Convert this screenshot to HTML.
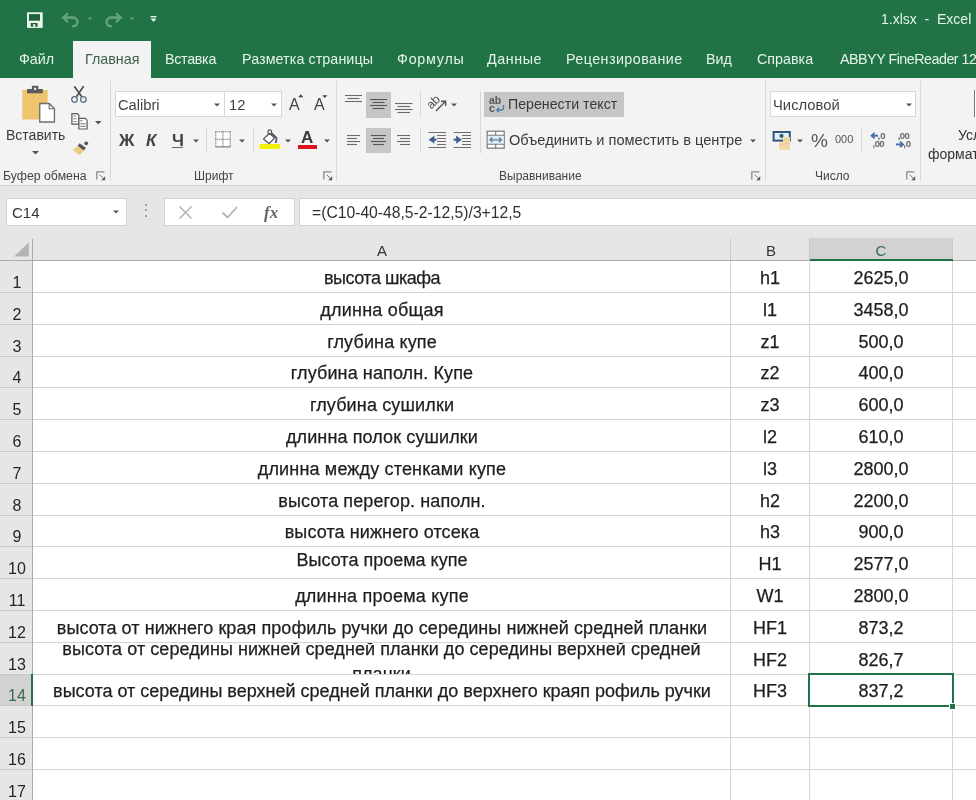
<!DOCTYPE html>
<html><head><meta charset="utf-8"><style>
html,body{margin:0;padding:0;width:976px;height:800px;overflow:hidden;background:#fff;font-family:"Liberation Sans", sans-serif;}
.a{position:absolute;}
.t{white-space:nowrap;will-change:transform;}
</style></head><body>
<div class="a" style="left:0px;top:0px;width:976px;height:78px;background:#217346;"></div><div class="a" style="left:73px;top:41px;width:78px;height:37px;background:#f3f3f3;"></div><div class="a t" style="left:18.5px;top:52.40px;font-size:14.3px;line-height:14.3px;color:#e4f4ea;letter-spacing:0px;">Файл</div><div class="a t" style="left:165px;top:52.40px;font-size:14.3px;line-height:14.3px;color:#e4f4ea;letter-spacing:-0.3px;">Вставка</div><div class="a t" style="left:242px;top:52.40px;font-size:14.3px;line-height:14.3px;color:#e4f4ea;letter-spacing:0.08px;">Разметка страницы</div><div class="a t" style="left:396.5px;top:52.40px;font-size:14.3px;line-height:14.3px;color:#e4f4ea;letter-spacing:0.77px;">Формулы</div><div class="a t" style="left:486.8px;top:52.40px;font-size:14.3px;line-height:14.3px;color:#e4f4ea;letter-spacing:0.56px;">Данные</div><div class="a t" style="left:566px;top:52.40px;font-size:14.3px;line-height:14.3px;color:#e4f4ea;letter-spacing:0.44px;">Рецензирование</div><div class="a t" style="left:706px;top:52.40px;font-size:14.3px;line-height:14.3px;color:#e4f4ea;letter-spacing:0px;">Вид</div><div class="a t" style="left:757px;top:52.40px;font-size:14.3px;line-height:14.3px;color:#e4f4ea;letter-spacing:0px;">Справка</div><div class="a t" style="left:839.5px;top:52.40px;font-size:14.3px;line-height:14.3px;color:#e4f4ea;letter-spacing:-0.5px;">ABBYY FineReader 12</div><div class="a t" style="left:85px;top:52.40px;font-size:14.3px;line-height:14.3px;color:#3e5f4b;">Главная</div><div class="a t" style="left:881px;top:11.85px;font-size:14px;line-height:14px;color:#e4f4ea;">1.xlsx&nbsp;&nbsp;-&nbsp;&nbsp;Excel</div><div class="a" style="left:0px;top:78px;width:976px;height:107px;background:#f3f3f3;"></div><div class="a" style="left:0px;top:185px;width:976px;height:1px;background:#d5d5d5;"></div><div class="a" style="left:110px;top:81px;width:1px;height:100px;background:#d9d9d9;"></div><div class="a" style="left:336px;top:81px;width:1px;height:100px;background:#d9d9d9;"></div><div class="a" style="left:765px;top:81px;width:1px;height:100px;background:#d9d9d9;"></div><div class="a" style="left:920px;top:81px;width:1px;height:100px;background:#d9d9d9;"></div><div class="a t" style="left:3.2px;top:169.89px;font-size:12.3px;line-height:12.3px;color:#444;">Буфер обмена</div><div class="a t" style="left:194px;top:170.14px;font-size:12px;line-height:12px;color:#444;">Шрифт</div><div class="a t" style="left:499px;top:170.14px;font-size:12px;line-height:12px;color:#444;">Выравнивание</div><div class="a t" style="left:815px;top:170.14px;font-size:12px;line-height:12px;color:#444;">Число</div><div class="a" style="left:0px;top:186px;width:976px;height:52px;background:#e6e6e6;"></div><div class="a" style="left:6px;top:198px;width:121px;height:28px;background:#fff;box-sizing:border-box;border:1px solid #d4d4d4;"></div><div class="a t" style="left:12px;top:204.80px;font-size:15px;line-height:15px;color:#333;">C14</div><div class="a" style="left:164px;top:198px;width:131px;height:28px;background:#fff;box-sizing:border-box;border:1px solid #d4d4d4;"></div><div class="a" style="left:299px;top:198px;width:690px;height:28px;background:#fff;box-sizing:border-box;border:1px solid #d4d4d4;"></div><div class="a t" style="left:311.5px;top:205.31px;font-size:15.7px;line-height:15.7px;color:#303030;">=(C10-40-48,5-2-12,5)/3+12,5</div><div class="a" style="left:0px;top:238px;width:976px;height:562px;background:#fff;"></div><div class="a" style="left:0px;top:238px;width:976px;height:22px;background:#e6e6e6;"></div><div class="a" style="left:0px;top:260px;width:32px;height:540px;background:#e6e6e6;"></div><div class="a" style="left:810px;top:238px;width:143px;height:22px;background:#d2d2d2;"></div><div class="a" style="left:0px;top:674px;width:32px;height:31px;background:#d2d2d2;"></div><div class="a" style="left:0px;top:260px;width:976px;height:1px;background:#d4d4d4;"></div><div class="a" style="left:0px;top:292px;width:976px;height:1px;background:#d4d4d4;"></div><div class="a" style="left:0px;top:324px;width:976px;height:1px;background:#d4d4d4;"></div><div class="a" style="left:0px;top:356px;width:976px;height:1px;background:#d4d4d4;"></div><div class="a" style="left:0px;top:387px;width:976px;height:1px;background:#d4d4d4;"></div><div class="a" style="left:0px;top:419px;width:976px;height:1px;background:#d4d4d4;"></div><div class="a" style="left:0px;top:451px;width:976px;height:1px;background:#d4d4d4;"></div><div class="a" style="left:0px;top:483px;width:976px;height:1px;background:#d4d4d4;"></div><div class="a" style="left:0px;top:515px;width:976px;height:1px;background:#d4d4d4;"></div><div class="a" style="left:0px;top:546px;width:976px;height:1px;background:#d4d4d4;"></div><div class="a" style="left:0px;top:578px;width:976px;height:1px;background:#d4d4d4;"></div><div class="a" style="left:0px;top:610px;width:976px;height:1px;background:#d4d4d4;"></div><div class="a" style="left:0px;top:642px;width:976px;height:1px;background:#d4d4d4;"></div><div class="a" style="left:0px;top:674px;width:976px;height:1px;background:#d4d4d4;"></div><div class="a" style="left:0px;top:705px;width:976px;height:1px;background:#d4d4d4;"></div><div class="a" style="left:0px;top:737px;width:976px;height:1px;background:#d4d4d4;"></div><div class="a" style="left:0px;top:769px;width:976px;height:1px;background:#d4d4d4;"></div><div class="a" style="left:0px;top:801px;width:976px;height:1px;background:#d4d4d4;"></div><div class="a" style="left:32px;top:238px;width:1px;height:562px;background:#d4d4d4;"></div><div class="a" style="left:730px;top:238px;width:1px;height:562px;background:#d4d4d4;"></div><div class="a" style="left:809px;top:238px;width:1px;height:562px;background:#d4d4d4;"></div><div class="a" style="left:952px;top:238px;width:1px;height:562px;background:#d4d4d4;"></div><div class="a" style="left:0px;top:292px;width:32px;height:1px;background:#c9c9c9;"></div><div class="a" style="left:0px;top:324px;width:32px;height:1px;background:#c9c9c9;"></div><div class="a" style="left:0px;top:356px;width:32px;height:1px;background:#c9c9c9;"></div><div class="a" style="left:0px;top:387px;width:32px;height:1px;background:#c9c9c9;"></div><div class="a" style="left:0px;top:419px;width:32px;height:1px;background:#c9c9c9;"></div><div class="a" style="left:0px;top:451px;width:32px;height:1px;background:#c9c9c9;"></div><div class="a" style="left:0px;top:483px;width:32px;height:1px;background:#c9c9c9;"></div><div class="a" style="left:0px;top:515px;width:32px;height:1px;background:#c9c9c9;"></div><div class="a" style="left:0px;top:546px;width:32px;height:1px;background:#c9c9c9;"></div><div class="a" style="left:0px;top:578px;width:32px;height:1px;background:#c9c9c9;"></div><div class="a" style="left:0px;top:610px;width:32px;height:1px;background:#c9c9c9;"></div><div class="a" style="left:0px;top:642px;width:32px;height:1px;background:#c9c9c9;"></div><div class="a" style="left:0px;top:674px;width:32px;height:1px;background:#c9c9c9;"></div><div class="a" style="left:0px;top:705px;width:32px;height:1px;background:#c9c9c9;"></div><div class="a" style="left:0px;top:737px;width:32px;height:1px;background:#c9c9c9;"></div><div class="a" style="left:0px;top:769px;width:32px;height:1px;background:#c9c9c9;"></div><div class="a" style="left:0px;top:801px;width:32px;height:1px;background:#c9c9c9;"></div><div class="a" style="left:730px;top:239px;width:1px;height:21px;background:#c9c9c9;"></div><div class="a" style="left:809px;top:239px;width:1px;height:21px;background:#c9c9c9;"></div><div class="a" style="left:952px;top:239px;width:1px;height:21px;background:#c9c9c9;"></div><div class="a" style="left:0px;top:260px;width:976px;height:1px;background:#ababab;"></div><div class="a" style="left:32px;top:239px;width:1px;height:562px;background:#ababab;"></div><svg class="a" style="left:13px;top:241px;" width="17" height="17" viewBox="0 0 17 17"><path d="M15.9 1.3V15.5H1.2z" fill="#b4b4b4"/></svg><div class="a" style="left:810px;top:259px;width:143px;height:2px;background:#217346;"></div><div class="a" style="left:31px;top:674px;width:2px;height:32px;background:#217346;"></div><div class="a t" style="left:-218.5px;width:1200px;text-align:center;top:242.90px;font-size:15px;line-height:15px;color:#333;">A</div><div class="a t" style="left:171.0px;width:1200px;text-align:center;top:242.90px;font-size:15px;line-height:15px;color:#333;">B</div><div class="a t" style="left:281.0px;width:1200px;text-align:center;top:242.90px;font-size:15px;line-height:15px;color:#3b6b4e;">C</div><div class="a t" style="left:-583.2px;width:1200px;text-align:center;top:274.86px;font-size:16px;line-height:16px;color:#262626;">1</div><div class="a t" style="left:-583.2px;width:1200px;text-align:center;top:306.86px;font-size:16px;line-height:16px;color:#262626;">2</div><div class="a t" style="left:-583.2px;width:1200px;text-align:center;top:338.86px;font-size:16px;line-height:16px;color:#262626;">3</div><div class="a t" style="left:-583.2px;width:1200px;text-align:center;top:369.86px;font-size:16px;line-height:16px;color:#262626;">4</div><div class="a t" style="left:-583.2px;width:1200px;text-align:center;top:401.86px;font-size:16px;line-height:16px;color:#262626;">5</div><div class="a t" style="left:-583.2px;width:1200px;text-align:center;top:433.86px;font-size:16px;line-height:16px;color:#262626;">6</div><div class="a t" style="left:-583.2px;width:1200px;text-align:center;top:465.86px;font-size:16px;line-height:16px;color:#262626;">7</div><div class="a t" style="left:-583.2px;width:1200px;text-align:center;top:497.86px;font-size:16px;line-height:16px;color:#262626;">8</div><div class="a t" style="left:-583.2px;width:1200px;text-align:center;top:528.86px;font-size:16px;line-height:16px;color:#262626;">9</div><div class="a t" style="left:-583.2px;width:1200px;text-align:center;top:560.86px;font-size:16px;line-height:16px;color:#262626;">10</div><div class="a t" style="left:-583.2px;width:1200px;text-align:center;top:592.86px;font-size:16px;line-height:16px;color:#262626;">11</div><div class="a t" style="left:-583.2px;width:1200px;text-align:center;top:624.86px;font-size:16px;line-height:16px;color:#262626;">12</div><div class="a t" style="left:-583.2px;width:1200px;text-align:center;top:656.86px;font-size:16px;line-height:16px;color:#262626;">13</div><div class="a t" style="left:-583.2px;width:1200px;text-align:center;top:687.86px;font-size:16px;line-height:16px;color:#3b6b4e;">14</div><div class="a t" style="left:-583.2px;width:1200px;text-align:center;top:719.86px;font-size:16px;line-height:16px;color:#262626;">15</div><div class="a t" style="left:-583.2px;width:1200px;text-align:center;top:751.86px;font-size:16px;line-height:16px;color:#262626;">16</div><div class="a t" style="left:-583.2px;width:1200px;text-align:center;top:783.86px;font-size:16px;line-height:16px;color:#262626;">17</div><div class="a t" style="left:-218.5px;width:1200px;text-align:center;top:268.96px;font-size:18px;line-height:18px;color:#1e1e1e;letter-spacing:-0.48px;-webkit-text-stroke:0.25px #1e1e1e;">высота шкафа</div><div class="a t" style="left:170.0px;width:1200px;text-align:center;top:268.96px;font-size:18px;line-height:18px;color:#1e1e1e;-webkit-text-stroke:0.25px #1e1e1e;">h1</div><div class="a t" style="left:281.0px;width:1200px;text-align:center;top:268.96px;font-size:18px;line-height:18px;color:#1e1e1e;-webkit-text-stroke:0.25px #1e1e1e;">2625,0</div><div class="a t" style="left:-218.5px;width:1200px;text-align:center;top:300.96px;font-size:18px;line-height:18px;color:#1e1e1e;letter-spacing:0.21px;-webkit-text-stroke:0.25px #1e1e1e;">длинна общая</div><div class="a t" style="left:170.0px;width:1200px;text-align:center;top:300.96px;font-size:18px;line-height:18px;color:#1e1e1e;-webkit-text-stroke:0.25px #1e1e1e;">l1</div><div class="a t" style="left:281.0px;width:1200px;text-align:center;top:300.96px;font-size:18px;line-height:18px;color:#1e1e1e;-webkit-text-stroke:0.25px #1e1e1e;">3458,0</div><div class="a t" style="left:-218.5px;width:1200px;text-align:center;top:332.96px;font-size:18px;line-height:18px;color:#1e1e1e;letter-spacing:0.14px;-webkit-text-stroke:0.25px #1e1e1e;">глубина купе</div><div class="a t" style="left:170.0px;width:1200px;text-align:center;top:332.96px;font-size:18px;line-height:18px;color:#1e1e1e;-webkit-text-stroke:0.25px #1e1e1e;">z1</div><div class="a t" style="left:281.0px;width:1200px;text-align:center;top:332.96px;font-size:18px;line-height:18px;color:#1e1e1e;-webkit-text-stroke:0.25px #1e1e1e;">500,0</div><div class="a t" style="left:-218.5px;width:1200px;text-align:center;top:363.96px;font-size:18px;line-height:18px;color:#1e1e1e;letter-spacing:0.11px;-webkit-text-stroke:0.25px #1e1e1e;">глубина наполн. Купе</div><div class="a t" style="left:170.0px;width:1200px;text-align:center;top:363.96px;font-size:18px;line-height:18px;color:#1e1e1e;-webkit-text-stroke:0.25px #1e1e1e;">z2</div><div class="a t" style="left:281.0px;width:1200px;text-align:center;top:363.96px;font-size:18px;line-height:18px;color:#1e1e1e;-webkit-text-stroke:0.25px #1e1e1e;">400,0</div><div class="a t" style="left:-218.5px;width:1200px;text-align:center;top:395.96px;font-size:18px;line-height:18px;color:#1e1e1e;letter-spacing:0.14px;-webkit-text-stroke:0.25px #1e1e1e;">глубина сушилки</div><div class="a t" style="left:170.0px;width:1200px;text-align:center;top:395.96px;font-size:18px;line-height:18px;color:#1e1e1e;-webkit-text-stroke:0.25px #1e1e1e;">z3</div><div class="a t" style="left:281.0px;width:1200px;text-align:center;top:395.96px;font-size:18px;line-height:18px;color:#1e1e1e;-webkit-text-stroke:0.25px #1e1e1e;">600,0</div><div class="a t" style="left:-218.5px;width:1200px;text-align:center;top:427.96px;font-size:18px;line-height:18px;color:#1e1e1e;letter-spacing:0.11px;-webkit-text-stroke:0.25px #1e1e1e;">длинна полок сушилки</div><div class="a t" style="left:170.0px;width:1200px;text-align:center;top:427.96px;font-size:18px;line-height:18px;color:#1e1e1e;-webkit-text-stroke:0.25px #1e1e1e;">l2</div><div class="a t" style="left:281.0px;width:1200px;text-align:center;top:427.96px;font-size:18px;line-height:18px;color:#1e1e1e;-webkit-text-stroke:0.25px #1e1e1e;">610,0</div><div class="a t" style="left:-218.5px;width:1200px;text-align:center;top:459.96px;font-size:18px;line-height:18px;color:#1e1e1e;letter-spacing:0.16px;-webkit-text-stroke:0.25px #1e1e1e;">длинна между стенками купе</div><div class="a t" style="left:170.0px;width:1200px;text-align:center;top:459.96px;font-size:18px;line-height:18px;color:#1e1e1e;-webkit-text-stroke:0.25px #1e1e1e;">l3</div><div class="a t" style="left:281.0px;width:1200px;text-align:center;top:459.96px;font-size:18px;line-height:18px;color:#1e1e1e;-webkit-text-stroke:0.25px #1e1e1e;">2800,0</div><div class="a t" style="left:-218.5px;width:1200px;text-align:center;top:491.96px;font-size:18px;line-height:18px;color:#1e1e1e;letter-spacing:0.1px;-webkit-text-stroke:0.25px #1e1e1e;">высота перегор. наполн.</div><div class="a t" style="left:170.0px;width:1200px;text-align:center;top:491.96px;font-size:18px;line-height:18px;color:#1e1e1e;-webkit-text-stroke:0.25px #1e1e1e;">h2</div><div class="a t" style="left:281.0px;width:1200px;text-align:center;top:491.96px;font-size:18px;line-height:18px;color:#1e1e1e;-webkit-text-stroke:0.25px #1e1e1e;">2200,0</div><div class="a t" style="left:-218.5px;width:1200px;text-align:center;top:522.96px;font-size:18px;line-height:18px;color:#1e1e1e;letter-spacing:0.1px;-webkit-text-stroke:0.25px #1e1e1e;">высота нижнего отсека</div><div class="a t" style="left:170.0px;width:1200px;text-align:center;top:522.96px;font-size:18px;line-height:18px;color:#1e1e1e;-webkit-text-stroke:0.25px #1e1e1e;">h3</div><div class="a t" style="left:281.0px;width:1200px;text-align:center;top:522.96px;font-size:18px;line-height:18px;color:#1e1e1e;-webkit-text-stroke:0.25px #1e1e1e;">900,0</div><div class="a t" style="left:-218.5px;width:1200px;text-align:center;top:551.46px;font-size:18px;line-height:18px;color:#1e1e1e;letter-spacing:0px;-webkit-text-stroke:0.25px #1e1e1e;">Высота проема купе</div><div class="a t" style="left:170.0px;width:1200px;text-align:center;top:554.96px;font-size:18px;line-height:18px;color:#1e1e1e;-webkit-text-stroke:0.25px #1e1e1e;">H1</div><div class="a t" style="left:281.0px;width:1200px;text-align:center;top:554.96px;font-size:18px;line-height:18px;color:#1e1e1e;-webkit-text-stroke:0.25px #1e1e1e;">2577,0</div><div class="a t" style="left:-218.5px;width:1200px;text-align:center;top:586.96px;font-size:18px;line-height:18px;color:#1e1e1e;letter-spacing:0.21px;-webkit-text-stroke:0.25px #1e1e1e;">длинна проема купе</div><div class="a t" style="left:170.0px;width:1200px;text-align:center;top:586.96px;font-size:18px;line-height:18px;color:#1e1e1e;-webkit-text-stroke:0.25px #1e1e1e;">W1</div><div class="a t" style="left:281.0px;width:1200px;text-align:center;top:586.96px;font-size:18px;line-height:18px;color:#1e1e1e;-webkit-text-stroke:0.25px #1e1e1e;">2800,0</div><div class="a t" style="left:-218.5px;width:1200px;text-align:center;top:618.96px;font-size:18px;line-height:18px;color:#1e1e1e;letter-spacing:0.07px;-webkit-text-stroke:0.25px #1e1e1e;">высота от нижнего края профиль ручки до середины нижней средней планки</div><div class="a t" style="left:170.0px;width:1200px;text-align:center;top:618.96px;font-size:18px;line-height:18px;color:#1e1e1e;-webkit-text-stroke:0.25px #1e1e1e;">HF1</div><div class="a t" style="left:281.0px;width:1200px;text-align:center;top:618.96px;font-size:18px;line-height:18px;color:#1e1e1e;-webkit-text-stroke:0.25px #1e1e1e;">873,2</div><div class="a t" style="left:170.0px;width:1200px;text-align:center;top:650.96px;font-size:18px;line-height:18px;color:#1e1e1e;-webkit-text-stroke:0.25px #1e1e1e;">HF2</div><div class="a t" style="left:281.0px;width:1200px;text-align:center;top:650.96px;font-size:18px;line-height:18px;color:#1e1e1e;-webkit-text-stroke:0.25px #1e1e1e;">826,7</div><div class="a t" style="left:-218.5px;width:1200px;text-align:center;top:681.96px;font-size:18px;line-height:18px;color:#1e1e1e;letter-spacing:0px;-webkit-text-stroke:0.25px #1e1e1e;">высота от середины верхней средней планки до верхнего краяп рофиль ручки</div><div class="a t" style="left:170.0px;width:1200px;text-align:center;top:681.96px;font-size:18px;line-height:18px;color:#1e1e1e;-webkit-text-stroke:0.25px #1e1e1e;">HF3</div><div class="a t" style="left:281.0px;width:1200px;text-align:center;top:681.96px;font-size:18px;line-height:18px;color:#1e1e1e;-webkit-text-stroke:0.25px #1e1e1e;">837,2</div><div class="a" style="left:33px;top:643px;width:697px;height:31px;overflow:hidden"><div class="t" style="position:absolute;left:0;width:697px;text-align:center;top:-6.3px;font-size:18px;line-height:24.5px;color:#1e1e1e;letter-spacing:0.07px;-webkit-text-stroke:0.25px #1e1e1e">высота от середины нижней средней планки до середины верхней средней<br>планки</div></div><div class="a" style="left:808px;top:673px;width:146px;height:34px;background:transparent;box-sizing:border-box;border:2px solid #217346;"></div><div class="a" style="left:949px;top:703px;width:7px;height:7px;background:#fff;"></div><div class="a" style="left:950px;top:704px;width:5px;height:5px;background:#217346;"></div><svg class="a" style="left:26px;top:11px;" width="18" height="18" viewBox="0 0 18 18"><rect x="1" y="1.3" width="15.7" height="15.6" fill="#e9f7ee"/><rect x="3" y="3.1" width="11" height="6.6" fill="#1d6139"/><rect x="4.8" y="12" width="6.8" height="3.7" fill="#1d6139"/><rect x="7" y="13.2" width="2.3" height="2.5" fill="#e9f7ee"/></svg><svg class="a" style="left:61px;top:11px;" width="20" height="18" viewBox="0 0 20 18"><path d="M2.5 6.6H12.2A4.3 4.3 0 0 1 12.2 15.2" fill="none" stroke="#5fa27b" stroke-width="2.6" stroke-linecap="round"/><path d="M6.2 2.9L2.5 6.6L6.2 10.3" fill="none" stroke="#5fa27b" stroke-width="2.6" stroke-linecap="round" stroke-linejoin="round"/></svg><svg class="a" style="left:87px;top:17px;" width="6" height="4" viewBox="0 0 6 4"><path d="M0.3 0.5h5l-2.5 2.7z" fill="#5fa27b"/></svg><svg class="a" style="left:103px;top:11px;" width="20" height="18" viewBox="0 0 20 18"><path d="M17.5 6.6H7.8A4.3 4.3 0 0 0 7.8 15.2" fill="none" stroke="#5fa27b" stroke-width="2.6" stroke-linecap="round"/><path d="M13.8 2.9L17.5 6.6L13.8 10.3" fill="none" stroke="#5fa27b" stroke-width="2.6" stroke-linecap="round" stroke-linejoin="round"/></svg><svg class="a" style="left:129px;top:17px;" width="6" height="4" viewBox="0 0 6 4"><path d="M0.3 0.5h5l-2.5 2.7z" fill="#5fa27b"/></svg><svg class="a" style="left:150px;top:15px;" width="8" height="8" viewBox="0 0 8 8"><rect x="0.6" y="1" width="5.8" height="1.3" fill="#e9f7ee"/><path d="M0.6 3.5h5.8l-2.9 3.4z" fill="#e9f7ee"/></svg><svg class="a" style="left:20px;top:84px;" width="38" height="40" viewBox="0 0 38 40"><rect x="2.3" y="6" width="25.3" height="29.5" fill="#eec46c"/><rect x="7" y="5" width="15.8" height="4.3" fill="#5b5b5b"/><rect x="11.9" y="1.8" width="6.4" height="4" fill="#5b5b5b"/><rect x="14" y="3.8" width="2.2" height="2" fill="#f3f3f3"/><path d="M19.75 19.5h9.5l5.2 5.2v13.3h-14.7z" fill="#fff" stroke="#6d6d6d" stroke-width="1.3"/><path d="M29.2 19.5v5.2h5.2" fill="none" stroke="#6d6d6d" stroke-width="1.1"/></svg><div class="a t" style="left:5.8px;top:127.90px;font-size:14px;line-height:14px;color:#3a3a3a;">Вставить</div><svg class="a" style="left:32px;top:151px;" width="7" height="4" viewBox="0 0 7 4"><path d="M0 0h7l-3.5 3.5z" fill="#555"/></svg><svg class="a" style="left:70px;top:85px;" width="19" height="20" viewBox="0 0 19 20"><path d="M4.6 1.8L11.4 11.2M13.4 1.6L6.8 11.2" stroke="#505050" stroke-width="1.7" fill="none" stroke-linecap="round"/><circle cx="4.5" cy="14.5" r="2.8" fill="#e3f1fa" stroke="#5f7282" stroke-width="1.3"/><circle cx="13.4" cy="14.5" r="2.8" fill="#e3f1fa" stroke="#5f7282" stroke-width="1.3"/></svg><svg class="a" style="left:70px;top:112px;" width="20" height="20" viewBox="0 0 20 20"><path d="M1.9 1.6h5.4l1.5 1.5v9h-6.9z" fill="#fff" stroke="#5a5a5a" stroke-width="1.2"/><path d="M3.3 4h3M3.3 6.8h3.5M3.3 9.6h3.5" stroke="#888" stroke-width="1"/><path d="M8.9 6.4h6.4l1.8 1.8v8.8h-8.2z" fill="#fff" stroke="#5a5a5a" stroke-width="1.2"/><path d="M10.2 8.8h2.5M10.2 11.8h5.5M10.2 14.3h5.5" stroke="#6a7a80" stroke-width="1"/></svg><svg class="a" style="left:95px;top:120.5px;" width="7" height="4" viewBox="0 0 7 4"><path d="M0 0h6.5l-3.25 3.5z" fill="#555"/></svg><svg class="a" style="left:71px;top:139px;" width="19" height="18" viewBox="0 0 19 18"><path d="M6.8 7.2L13.2 11.6L8.6 16.2L1.6 10.8z" fill="#ecca80"/><path d="M7.6 5.6L13.9 10.1" stroke="#555" stroke-width="3.2"/><circle cx="15.2" cy="4.3" r="1.9" fill="#555"/></svg><svg class="a" style="left:95.5px;top:170.8px;" width="10" height="10" viewBox="0 0 10 10"><path d="M0.8 8.6V0.8H8.4" fill="none" stroke="#8a8a8a" stroke-width="1.3"/><path d="M3.6 3.6L7.4 7.4" stroke="#777" stroke-width="1"/><path d="M9.2 9.2H5.2L9.2 5.2z" fill="#555"/></svg><svg class="a" style="left:322.5px;top:170.8px;" width="10" height="10" viewBox="0 0 10 10"><path d="M0.8 8.6V0.8H8.4" fill="none" stroke="#8a8a8a" stroke-width="1.3"/><path d="M3.6 3.6L7.4 7.4" stroke="#777" stroke-width="1"/><path d="M9.2 9.2H5.2L9.2 5.2z" fill="#555"/></svg><svg class="a" style="left:750.8px;top:170.8px;" width="10" height="10" viewBox="0 0 10 10"><path d="M0.8 8.6V0.8H8.4" fill="none" stroke="#8a8a8a" stroke-width="1.3"/><path d="M3.6 3.6L7.4 7.4" stroke="#777" stroke-width="1"/><path d="M9.2 9.2H5.2L9.2 5.2z" fill="#555"/></svg><svg class="a" style="left:905.8px;top:170.8px;" width="10" height="10" viewBox="0 0 10 10"><path d="M0.8 8.6V0.8H8.4" fill="none" stroke="#8a8a8a" stroke-width="1.3"/><path d="M3.6 3.6L7.4 7.4" stroke="#777" stroke-width="1"/><path d="M9.2 9.2H5.2L9.2 5.2z" fill="#555"/></svg><div class="a" style="left:115px;top:91px;width:110px;height:26px;background:#fff;box-sizing:border-box;border:1px solid #d6d6d6;"></div><div class="a" style="left:224px;top:91px;width:58px;height:26px;background:#fff;box-sizing:border-box;border:1px solid #d6d6d6;"></div><div class="a t" style="left:117.5px;top:98.16px;font-size:14.7px;line-height:14.7px;color:#444;">Calibri</div><div class="a t" style="left:228.5px;top:98.16px;font-size:14.7px;line-height:14.7px;color:#444;">12</div><svg class="a" style="left:213.5px;top:102.5px;" width="7" height="4" viewBox="0 0 7 4"><path d="M0 0.5h6l-3.0 3z" fill="#555"/></svg><svg class="a" style="left:271px;top:102.5px;" width="7" height="4" viewBox="0 0 7 4"><path d="M0 0.5h6l-3.0 3z" fill="#555"/></svg><div class="a t" style="left:289.2px;top:96.66px;font-size:16px;line-height:16px;color:#444;">A</div><svg class="a" style="left:297.5px;top:94.3px;" width="6" height="3.5" viewBox="0 0 6 3.5"><path d="M0.2 3.2L2.8 0.3L5.4 3.2z" fill="#444"/></svg><div class="a t" style="left:313.9px;top:97.06px;font-size:16px;line-height:16px;color:#444;">A</div><svg class="a" style="left:322.2px;top:95px;" width="6" height="3.5" viewBox="0 0 6 3.5"><path d="M0.2 0.3L2.8 3L5.4 0.3z" fill="#444"/></svg><div class="a t" style="left:119px;top:132.01px;font-size:17px;line-height:17px;color:#444;font-weight:bold;">Ж</div><div class="a t" style="left:145.8px;top:132.01px;font-size:17px;line-height:17px;color:#444;font-weight:bold;font-style:italic;">К</div><div class="a t" style="left:171.8px;top:132.01px;font-size:17px;line-height:17px;color:#444;font-weight:bold;">Ч</div><div class="a" style="left:171.5px;top:146.6px;width:11.5px;height:1.5px;background:#666;"></div><svg class="a" style="left:192.5px;top:138.6px;" width="7" height="4" viewBox="0 0 7 4"><path d="M0 0.5h6l-3.0 3z" fill="#555"/></svg><div class="a" style="left:206px;top:128px;width:1px;height:24px;background:#d8d8d8;"></div><svg class="a" style="left:214px;top:130px;" width="18" height="18" viewBox="0 0 18 18"><rect x="1.8" y="1.8" width="14.4" height="14.4" fill="#fff"/><rect x="1.25" y="1.25" width="1.1" height="1.1" fill="#6a6a6a"/><rect x="1.25" y="1.25" width="1.1" height="1.1" fill="#6a6a6a"/><rect x="15.65" y="1.25" width="1.1" height="1.1" fill="#6a6a6a"/><rect x="8.35" y="1.25" width="1.1" height="1.1" fill="#6a6a6a"/><rect x="1.25" y="8.75" width="1.1" height="1.1" fill="#6a6a6a"/><rect x="3.25" y="1.25" width="1.1" height="1.1" fill="#6a6a6a"/><rect x="1.25" y="3.25" width="1.1" height="1.1" fill="#6a6a6a"/><rect x="15.65" y="3.25" width="1.1" height="1.1" fill="#6a6a6a"/><rect x="8.35" y="3.25" width="1.1" height="1.1" fill="#6a6a6a"/><rect x="3.25" y="8.75" width="1.1" height="1.1" fill="#6a6a6a"/><rect x="5.25" y="1.25" width="1.1" height="1.1" fill="#6a6a6a"/><rect x="1.25" y="5.25" width="1.1" height="1.1" fill="#6a6a6a"/><rect x="15.65" y="5.25" width="1.1" height="1.1" fill="#6a6a6a"/><rect x="8.35" y="5.25" width="1.1" height="1.1" fill="#6a6a6a"/><rect x="5.25" y="8.75" width="1.1" height="1.1" fill="#6a6a6a"/><rect x="7.25" y="1.25" width="1.1" height="1.1" fill="#6a6a6a"/><rect x="1.25" y="7.25" width="1.1" height="1.1" fill="#6a6a6a"/><rect x="15.65" y="7.25" width="1.1" height="1.1" fill="#6a6a6a"/><rect x="8.35" y="7.25" width="1.1" height="1.1" fill="#6a6a6a"/><rect x="7.25" y="8.75" width="1.1" height="1.1" fill="#6a6a6a"/><rect x="9.25" y="1.25" width="1.1" height="1.1" fill="#6a6a6a"/><rect x="1.25" y="9.25" width="1.1" height="1.1" fill="#6a6a6a"/><rect x="15.65" y="9.25" width="1.1" height="1.1" fill="#6a6a6a"/><rect x="8.35" y="9.25" width="1.1" height="1.1" fill="#6a6a6a"/><rect x="9.25" y="8.75" width="1.1" height="1.1" fill="#6a6a6a"/><rect x="11.25" y="1.25" width="1.1" height="1.1" fill="#6a6a6a"/><rect x="1.25" y="11.25" width="1.1" height="1.1" fill="#6a6a6a"/><rect x="15.65" y="11.25" width="1.1" height="1.1" fill="#6a6a6a"/><rect x="8.35" y="11.25" width="1.1" height="1.1" fill="#6a6a6a"/><rect x="11.25" y="8.75" width="1.1" height="1.1" fill="#6a6a6a"/><rect x="13.25" y="1.25" width="1.1" height="1.1" fill="#6a6a6a"/><rect x="1.25" y="13.25" width="1.1" height="1.1" fill="#6a6a6a"/><rect x="15.65" y="13.25" width="1.1" height="1.1" fill="#6a6a6a"/><rect x="8.35" y="13.25" width="1.1" height="1.1" fill="#6a6a6a"/><rect x="13.25" y="8.75" width="1.1" height="1.1" fill="#6a6a6a"/><rect x="15.25" y="1.25" width="1.1" height="1.1" fill="#6a6a6a"/><rect x="1.25" y="15.25" width="1.1" height="1.1" fill="#6a6a6a"/><rect x="15.65" y="15.25" width="1.1" height="1.1" fill="#6a6a6a"/><rect x="8.35" y="15.25" width="1.1" height="1.1" fill="#6a6a6a"/><rect x="15.25" y="8.75" width="1.1" height="1.1" fill="#6a6a6a"/><path d="M1.3 16.8h15.4" stroke="#999" stroke-width="1.6"/></svg><svg class="a" style="left:238.7px;top:138.7px;" width="7" height="4" viewBox="0 0 7 4"><path d="M0 0.5h6l-3.0 3z" fill="#555"/></svg><div class="a" style="left:252.5px;top:128px;width:1px;height:24px;background:#d8d8d8;"></div><svg class="a" style="left:258px;top:128px;" width="24" height="22" viewBox="0 0 24 22"><path d="M5.4 11.1L11.5 5.2L16.6 9.9L11.1 15.6z" fill="#fff" stroke="#555" stroke-width="1.3" stroke-linejoin="round"/><path d="M10 5.8V3.6a1.8 1.8 0 0 1 3.6 0V8" fill="none" stroke="#555" stroke-width="1.2"/><path d="M14 5.5L18.5 9.8L18 15" fill="none" stroke="#4d5d70" stroke-width="1.8" stroke-linejoin="round"/><rect x="1.5" y="16" width="20.7" height="5" rx="1.2" fill="#f0f000"/></svg><svg class="a" style="left:285px;top:138.7px;" width="7" height="4" viewBox="0 0 7 4"><path d="M0 0.5h6l-3.0 3z" fill="#555"/></svg><div class="a t" style="left:300.6px;top:129.21px;font-size:17px;line-height:17px;color:#3a3a3a;font-weight:bold;">A</div><div class="a" style="left:298.2px;top:144.6px;width:18.7px;height:4px;background:#d8161b;"></div><svg class="a" style="left:323.5px;top:138.7px;" width="7" height="4" viewBox="0 0 7 4"><path d="M0 0.5h6l-3.0 3z" fill="#555"/></svg><svg class="a" style="left:345px;top:95px;" width="24" height="24" viewBox="0 0 24 24"><path d="M0 0.5h17" stroke="#6a6a6a" stroke-width="1.1"/><path d="M2.5 3.5h12" stroke="#6a6a6a" stroke-width="1.1"/><path d="M0 6.5h17" stroke="#6a6a6a" stroke-width="1.1"/></svg><div class="a" style="left:366px;top:91.5px;width:25px;height:26px;background:#c6c6c6;"></div><svg class="a" style="left:370px;top:99px;" width="24" height="24" viewBox="0 0 24 24"><path d="M0 0.5h17" stroke="#555" stroke-width="1.1"/><path d="M2.5 3.5h12" stroke="#555" stroke-width="1.1"/><path d="M0 6.5h17" stroke="#555" stroke-width="1.1"/><path d="M2.5 9.5h12" stroke="#555" stroke-width="1.1"/></svg><svg class="a" style="left:395px;top:102.5px;" width="24" height="24" viewBox="0 0 24 24"><path d="M0 0.5h17.5" stroke="#6a6a6a" stroke-width="1.1"/><path d="M2.5 3.5h12.5" stroke="#6a6a6a" stroke-width="1.1"/><path d="M0 6.5h17.5" stroke="#6a6a6a" stroke-width="1.1"/><path d="M2.5 9.5h12.5" stroke="#6a6a6a" stroke-width="1.1"/></svg><div class="a" style="left:420px;top:91.5px;width:1px;height:25px;background:#d8d8d8;"></div><svg class="a" style="left:426px;top:90px;" width="24" height="24" viewBox="0 0 24 24"><g transform="translate(5.2 19.8) rotate(-45)"><text x="0" y="0" font-family="Liberation Sans" font-size="12.5" fill="#555">ab</text></g><path d="M10 21L19.5 11.3" stroke="#555" stroke-width="1.4"/><path d="M15 11.3h4.6v4.6" fill="none" stroke="#555" stroke-width="1.4"/></svg><svg class="a" style="left:451px;top:103px;" width="7" height="4" viewBox="0 0 7 4"><path d="M0 0.5h6l-3.0 3z" fill="#555"/></svg><svg class="a" style="left:346.5px;top:135px;" width="24" height="24" viewBox="0 0 24 24"><path d="M0 0.5h13" stroke="#6a6a6a" stroke-width="1.1"/><path d="M0 3.5h10" stroke="#6a6a6a" stroke-width="1.1"/><path d="M0 6.5h13" stroke="#6a6a6a" stroke-width="1.1"/><path d="M0 9.5h10" stroke="#6a6a6a" stroke-width="1.1"/></svg><div class="a" style="left:366px;top:127.5px;width:25px;height:25.5px;background:#c6c6c6;"></div><svg class="a" style="left:371px;top:135px;" width="24" height="24" viewBox="0 0 24 24"><path d="M0 0.5h15" stroke="#555" stroke-width="1.1"/><path d="M2 3.5h11" stroke="#555" stroke-width="1.1"/><path d="M0 6.5h15" stroke="#555" stroke-width="1.1"/><path d="M2 9.5h11" stroke="#555" stroke-width="1.1"/></svg><svg class="a" style="left:397px;top:135px;" width="24" height="24" viewBox="0 0 24 24"><path d="M0 0.5h13" stroke="#6a6a6a" stroke-width="1.1"/><path d="M3 3.5h10" stroke="#6a6a6a" stroke-width="1.1"/><path d="M0 6.5h13" stroke="#6a6a6a" stroke-width="1.1"/><path d="M3 9.5h10" stroke="#6a6a6a" stroke-width="1.1"/></svg><div class="a" style="left:420px;top:128px;width:1px;height:24px;background:#d8d8d8;"></div><svg class="a" style="left:428px;top:131px;" width="20" height="18" viewBox="0 0 20 18"><path d="M0.5 1.5h17.5M9 4.5h9M9 7.5h9M9 10.5h9M9 13.5h9M0.5 16.5h17.5" stroke="#6f6f6f" stroke-width="1"/><path d="M0.6 8.7L6.6 4.6Q5.6 8.7 6.6 12.8z" fill="#3f5f8a"/><rect x="5" y="7.6" width="3.4" height="2.2" fill="#3f5f8a"/></svg><svg class="a" style="left:453px;top:131px;" width="20" height="18" viewBox="0 0 20 18"><path d="M0.5 1.5h17.5M9 4.5h9M9 7.5h9M9 10.5h9M9 13.5h9M0.5 16.5h17.5" stroke="#6f6f6f" stroke-width="1"/><path d="M8.9 8.7L2.9 4.6Q3.9 8.7 2.9 12.8z" fill="#3f5f8a"/><rect x="0.6" y="7.6" width="3.4" height="2.2" fill="#3f5f8a"/></svg><div class="a" style="left:479.5px;top:91px;width:1px;height:62px;background:#d8d8d8;"></div><div class="a" style="left:484px;top:91.8px;width:140px;height:25.2px;background:#c6c6c6;"></div><svg class="a" style="left:487px;top:94px;" width="20" height="20" viewBox="0 0 20 20"><text x="2" y="9.5" font-family="Liberation Sans" font-size="10.5" font-weight="bold" fill="#555">ab</text><text x="2" y="17.5" font-family="Liberation Sans" font-size="10.5" font-weight="bold" fill="#555">c</text><path d="M16.5 11v2.5a2.5 2.5 0 0 1-2.5 2.5H10" fill="none" stroke="#4a7bb0" stroke-width="1.3"/><path d="M12 13.8L9.8 16L12 18.2" fill="none" stroke="#4a7bb0" stroke-width="1.3"/></svg><div class="a t" style="left:508px;top:97.38px;font-size:14.2px;line-height:14.2px;color:#3a3a3a;">Перенести текст</div><svg class="a" style="left:486px;top:129.5px;" width="20" height="20" viewBox="0 0 20 20"><rect x="1.2" y="1.2" width="17" height="17" fill="#fff" stroke="#777" stroke-width="1.2"/><rect x="1.8" y="5.6" width="16" height="8.6" fill="#e1eef8"/><path d="M1.2 5.3h17M1.2 14.3h17M9.7 1.2v4.1M9.7 14.3v4" stroke="#777" stroke-width="1.1"/><path d="M4 9.8h11.5M6.5 7.5L4 9.8L6.5 12.1M13 7.5L15.5 9.8L13 12.1" fill="none" stroke="#5f7f99" stroke-width="1.3"/></svg><div class="a t" style="left:508.5px;top:132.64px;font-size:14.6px;line-height:14.6px;color:#3a3a3a;">Объединить и поместить в центре</div><svg class="a" style="left:749.5px;top:139px;" width="7" height="4" viewBox="0 0 7 4"><path d="M0 0.5h6l-3.0 3z" fill="#555"/></svg><div class="a" style="left:770px;top:91px;width:146px;height:26px;background:#fff;box-sizing:border-box;border:1px solid #d6d6d6;"></div><div class="a t" style="left:772.5px;top:98.07px;font-size:14.8px;line-height:14.8px;color:#444;">Числовой</div><svg class="a" style="left:905.5px;top:102.5px;" width="7" height="4" viewBox="0 0 7 4"><path d="M0 0.5h6l-3.0 3z" fill="#555"/></svg><svg class="a" style="left:771px;top:129px;" width="22" height="22" viewBox="0 0 22 22"><rect x="2.6" y="3" width="16.2" height="8.6" fill="#e2f2fa" stroke="#33527c" stroke-width="2"/><circle cx="10.5" cy="6.9" r="2.1" fill="#2f5f78"/><path d="M12 8h7v13h-11v-8h4z" fill="#f0dba8"/><path d="M8.5 15.5h4M13 11h5.5M13 14.5h5.5" stroke="#e5c88a" stroke-width="0.8"/></svg><svg class="a" style="left:797px;top:138.5px;" width="7" height="4" viewBox="0 0 7 4"><path d="M0 0.5h6l-3.0 3z" fill="#555"/></svg><div class="a t" style="left:811px;top:130.52px;font-size:19px;line-height:19px;color:#555;">%</div><div class="a t" style="left:835px;top:134.29px;font-size:11px;line-height:11px;color:#555;">000</div><div class="a" style="left:861px;top:128px;width:1px;height:24px;background:#d8d8d8;"></div><svg class="a" style="left:870px;top:131px;" width="18" height="19" viewBox="0 0 18 19"><path d="M2 4.7h6" stroke="#4a6ea6" stroke-width="2"/><path d="M4.6 2L1.6 4.7L4.6 7.4" fill="none" stroke="#4a6ea6" stroke-width="1.9"/><text x="7.6" y="7.6" font-family="Liberation Sans" font-size="9.5" font-weight="bold" fill="#666">,0</text><text x="2.6" y="16.3" font-family="Liberation Sans" font-size="9.5" font-weight="bold" fill="#666" letter-spacing="-0.6">,00</text></svg><svg class="a" style="left:895px;top:131px;" width="18" height="19" viewBox="0 0 18 19"><text x="2.8" y="7.6" font-family="Liberation Sans" font-size="9.5" font-weight="bold" fill="#666" letter-spacing="-0.6">,00</text><path d="M1 13.4h6" stroke="#4a6ea6" stroke-width="2"/><path d="M5 10.7L8 13.4L5 16.1" fill="none" stroke="#4a6ea6" stroke-width="1.9"/><text x="8.2" y="16.3" font-family="Liberation Sans" font-size="9.5" font-weight="bold" fill="#666">,0</text></svg><div class="a" style="left:974px;top:90px;width:2px;height:27px;background:#fff;border-left:1px solid #777;"></div><div class="a t" style="left:958px;top:127.95px;font-size:14px;line-height:14px;color:#333;">Условное</div><div class="a t" style="left:927.5px;top:146.55px;font-size:14px;line-height:14px;color:#333;">форматирование</div><svg class="a" style="left:112.5px;top:210px;" width="7" height="4" viewBox="0 0 7 4"><path d="M0 0.5h6l-3.0 3z" fill="#555"/></svg><div class="a" style="left:145px;top:204.2px;width:2px;height:2px;background:#888;border-radius:1px;"></div><div class="a" style="left:145px;top:209.4px;width:2px;height:2px;background:#888;border-radius:1px;"></div><div class="a" style="left:145px;top:214.5px;width:2px;height:2px;background:#888;border-radius:1px;"></div><svg class="a" style="left:178px;top:205px;" width="16" height="15" viewBox="0 0 16 15"><path d="M1.5 1.5L13.5 13.5M13.5 1.5L1.5 13.5" stroke="#b3b3b3" stroke-width="1.5"/></svg><svg class="a" style="left:221px;top:205px;" width="18" height="15" viewBox="0 0 18 15"><path d="M1.5 7.5L6.5 12.5L16 2" fill="none" stroke="#b3b3b3" stroke-width="1.8"/></svg><div class="a t" style="left:263.5px;top:204.11px;font-size:17px;line-height:17px;color:#666;font-family:'Liberation Serif',serif;font-style:italic;font-weight:bold;">fx</div>
</body></html>
